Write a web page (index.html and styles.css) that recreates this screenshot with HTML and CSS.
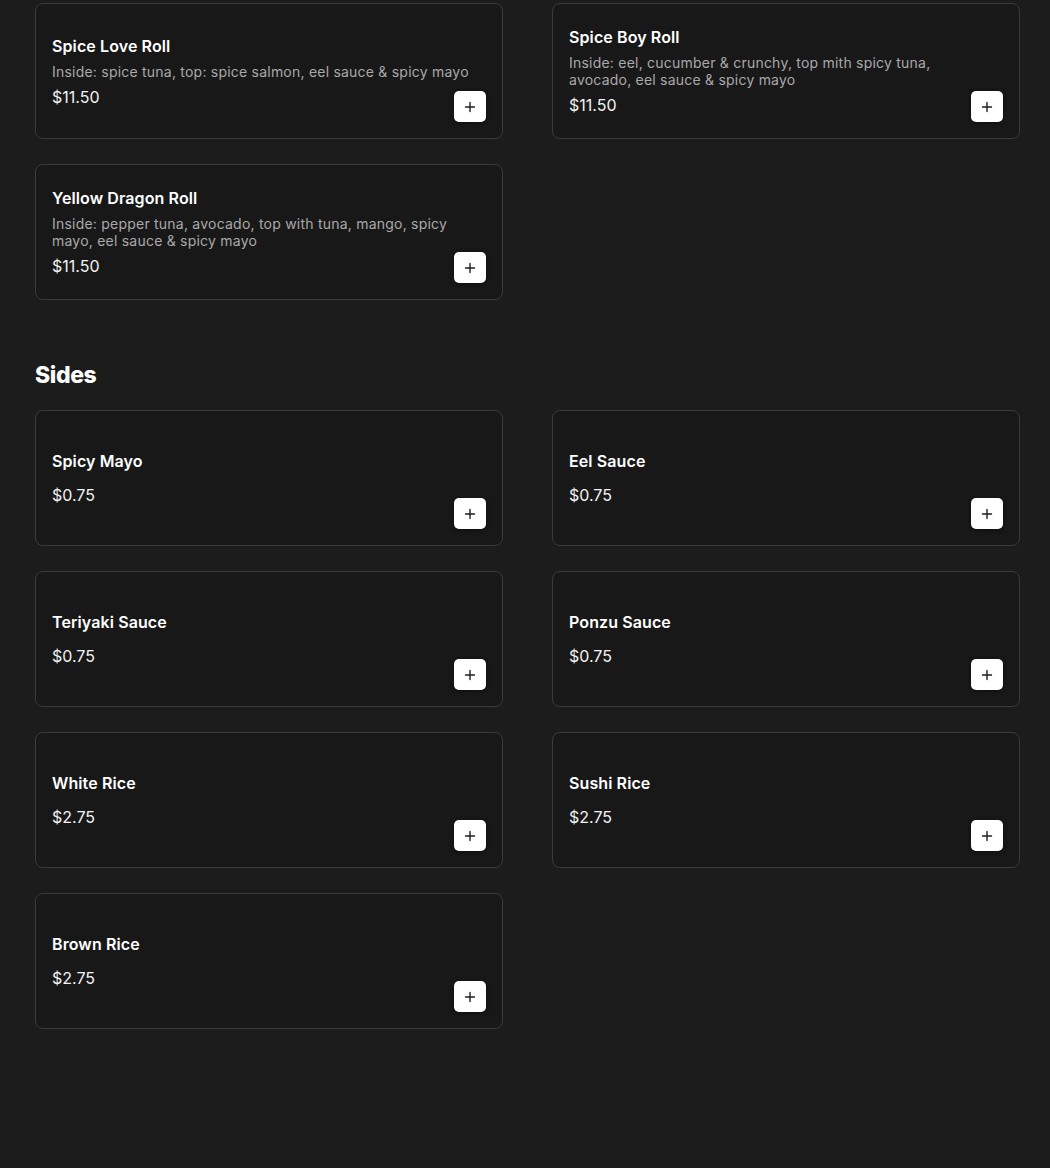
FILE: index.html
```html
<!DOCTYPE html>
<html lang="en">
<head>
<meta charset="utf-8">
<title>Menu</title>
<link rel="stylesheet" href="styles.css">
</head>
<body>
<main class="page">
  <section class="section first">
    <div class="grid">
      <article class="card">
        <div class="info">
          <h3 class="name">Spice Love Roll</h3>
          <p class="desc">Inside: spice tuna, top: spice salmon, eel sauce &amp; spicy mayo</p>
          <p class="price">$11.50</p>
        </div>
        <button class="add" aria-label="Add"><svg viewBox="0 0 12 12" width="12" height="12"><path d="M6 1.5v9M1.5 6h9" stroke="#1e1e1e" stroke-width="1.4" stroke-linecap="round"/></svg></button>
      </article>
      <article class="card">
        <div class="info">
          <h3 class="name">Spice Boy Roll</h3>
          <p class="desc">Inside: eel, cucumber &amp; crunchy, top mith spicy tuna, avocado, eel sauce &amp; spicy mayo</p>
          <p class="price">$11.50</p>
        </div>
        <button class="add" aria-label="Add"><svg viewBox="0 0 12 12" width="12" height="12"><path d="M6 1.5v9M1.5 6h9" stroke="#1e1e1e" stroke-width="1.4" stroke-linecap="round"/></svg></button>
      </article>
      <article class="card">
        <div class="info">
          <h3 class="name">Yellow Dragon Roll</h3>
          <p class="desc">Inside: pepper tuna, avocado, top with tuna, mango, spicy mayo, eel sauce &amp; spicy mayo</p>
          <p class="price">$11.50</p>
        </div>
        <button class="add" aria-label="Add"><svg viewBox="0 0 12 12" width="12" height="12"><path d="M6 1.5v9M1.5 6h9" stroke="#1e1e1e" stroke-width="1.4" stroke-linecap="round"/></svg></button>
      </article>
    </div>
  </section>

  <section class="section">
    <h2 class="section-title">Sides</h2>
    <div class="grid">
      <article class="card">
        <div class="info">
          <h3 class="name">Spicy Mayo</h3>
          <p class="desc"></p>
          <p class="price">$0.75</p>
        </div>
        <button class="add" aria-label="Add"><svg viewBox="0 0 12 12" width="12" height="12"><path d="M6 1.5v9M1.5 6h9" stroke="#1e1e1e" stroke-width="1.4" stroke-linecap="round"/></svg></button>
      </article>
      <article class="card">
        <div class="info">
          <h3 class="name">Eel Sauce</h3>
          <p class="desc"></p>
          <p class="price">$0.75</p>
        </div>
        <button class="add" aria-label="Add"><svg viewBox="0 0 12 12" width="12" height="12"><path d="M6 1.5v9M1.5 6h9" stroke="#1e1e1e" stroke-width="1.4" stroke-linecap="round"/></svg></button>
      </article>
      <article class="card">
        <div class="info">
          <h3 class="name">Teriyaki Sauce</h3>
          <p class="desc"></p>
          <p class="price">$0.75</p>
        </div>
        <button class="add" aria-label="Add"><svg viewBox="0 0 12 12" width="12" height="12"><path d="M6 1.5v9M1.5 6h9" stroke="#1e1e1e" stroke-width="1.4" stroke-linecap="round"/></svg></button>
      </article>
      <article class="card">
        <div class="info">
          <h3 class="name">Ponzu Sauce</h3>
          <p class="desc"></p>
          <p class="price">$0.75</p>
        </div>
        <button class="add" aria-label="Add"><svg viewBox="0 0 12 12" width="12" height="12"><path d="M6 1.5v9M1.5 6h9" stroke="#1e1e1e" stroke-width="1.4" stroke-linecap="round"/></svg></button>
      </article>
      <article class="card">
        <div class="info">
          <h3 class="name">White Rice</h3>
          <p class="desc"></p>
          <p class="price">$2.75</p>
        </div>
        <button class="add" aria-label="Add"><svg viewBox="0 0 12 12" width="12" height="12"><path d="M6 1.5v9M1.5 6h9" stroke="#1e1e1e" stroke-width="1.4" stroke-linecap="round"/></svg></button>
      </article>
      <article class="card">
        <div class="info">
          <h3 class="name">Sushi Rice</h3>
          <p class="desc"></p>
          <p class="price">$2.75</p>
        </div>
        <button class="add" aria-label="Add"><svg viewBox="0 0 12 12" width="12" height="12"><path d="M6 1.5v9M1.5 6h9" stroke="#1e1e1e" stroke-width="1.4" stroke-linecap="round"/></svg></button>
      </article>
      <article class="card">
        <div class="info">
          <h3 class="name">Brown Rice</h3>
          <p class="desc"></p>
          <p class="price">$2.75</p>
        </div>
        <button class="add" aria-label="Add"><svg viewBox="0 0 12 12" width="12" height="12"><path d="M6 1.5v9M1.5 6h9" stroke="#1e1e1e" stroke-width="1.4" stroke-linecap="round"/></svg></button>
      </article>
    </div>
  </section>
</main>
</body>
</html>
```

FILE: styles.css
```css
* { box-sizing: border-box; }

html, body {
  margin: 0;
  padding: 0;
  background: #1c1c1c;
}

body {
  font-family: Inter, "Open Sans", "Liberation Sans", sans-serif;
  color: #ffffff;
  min-height: 1168px;
}

.page {
  padding: 3px 30px 0 35px;
}

.grid {
  display: grid;
  grid-template-columns: 468px 468px;
  column-gap: 49px;
  row-gap: 25px;
}

.section-title {
  margin: 60px 0 20px;
  font-size: 23px;
  line-height: 30px;
  font-weight: 800;
  letter-spacing: -0.4px;
  color: #ffffff;
}

.card {
  position: relative;
  height: 136px;
  background: #181818;
  border: 1px solid #3a3a3a;
  border-radius: 8px;
  padding: 0 30px 0 16px;
  display: flex;
  align-items: center;
}

.info {
  display: flex;
  flex-direction: column;
  gap: 5px;
  width: 422px;
  flex: none;
}

.name {
  margin: 0;
  font-size: 16px;
  line-height: 24px;
  font-weight: 600;
  letter-spacing: 0.1px;
  color: #ffffff;
}

.desc {
  margin: 0;
  font-size: 14px;
  line-height: 17px;
  font-weight: 400;
  letter-spacing: 0.22px;
  color: #a9a9a9;
}

.price {
  margin: 0;
  font-size: 16px;
  line-height: 24px;
  font-weight: 400;
  color: #f2f2f2;
}

.add {
  position: absolute;
  right: 16px;
  bottom: 16px;
  width: 32px;
  height: 31px;
  padding: 0;
  border: none;
  border-radius: 5px;
  background: #ffffff;
  box-shadow: 0 1px 4px rgba(0, 0, 0, 0.5);
  display: flex;
  align-items: center;
  justify-content: center;
  cursor: pointer;
}

.add svg { display: block; }
```
